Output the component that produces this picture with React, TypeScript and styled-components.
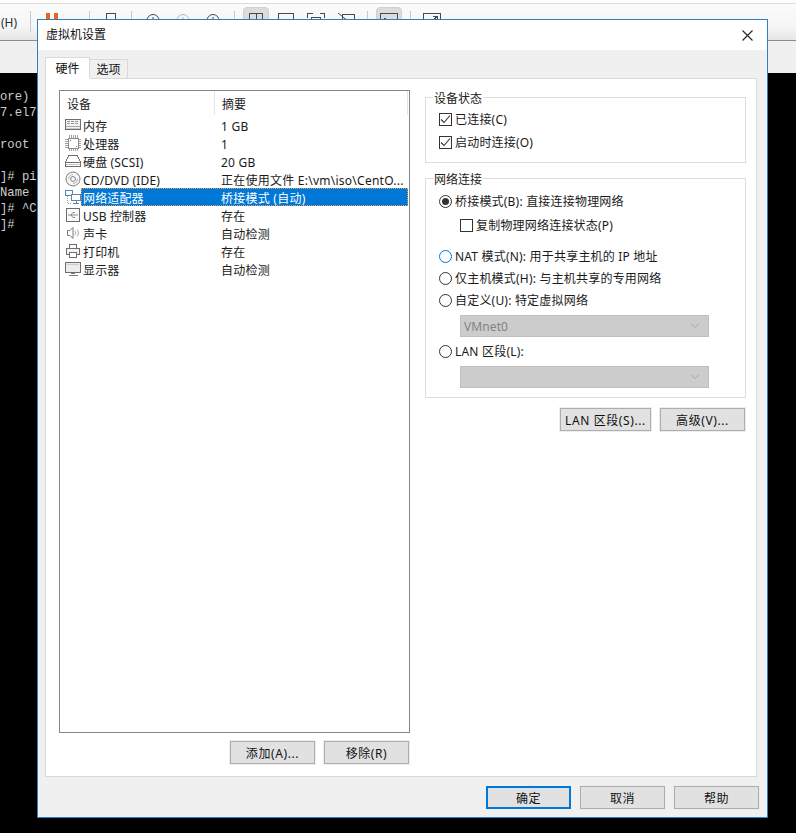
import React from "react";
import styled, { createGlobalStyle } from "styled-components";

const Global = createGlobalStyle`
  html, body { margin: 0; padding: 0; background: #000; }
  body { width: 796px; height: 833px; overflow: hidden; font-family: "Noto Sans", "Noto Sans CJK SC", sans-serif; font-size: 12px; color: #1a1a1a; position: relative; }
`;

const Page = styled.div`
  width: 796px; height: 833px; display: flex; flex-direction: column; position: relative; background: #000; overflow: hidden;
`;
const Toolbar = styled.div`
  flex: none; display: flex; align-items: flex-start;
  margin-top: 3px; padding-top: 3px; box-sizing: border-box; height: 38px;
  border-top: 1px solid #dcdcdc; border-bottom: 1px solid #8c8c8c;
  background: linear-gradient(#fbfbfb, #f6f6f6 60%, #e6e6e6);
  box-shadow: 0 -3px 0 #fff;
`;
const MenuHint = styled.span`
  width: 30px; height: 24px; line-height: 24px; margin-top: 4px; padding-left: 1px; box-sizing: border-box; font-size: 12px; color: #2a2a3a; flex: none;
`;
const ToolSep = styled.span<{ $before?: number }>`
  width: 1px; height: 21px; margin: 4px 6px 0 ${(p) => p.$before ?? 6}px; background: #c9c9c9; flex: none;
`;
const ToolSlot = styled.span<{ $on?: boolean }>`
  width: ${(p) => (p.$on ? 26 : 30)}px; height: 28px; margin: 0 ${(p) => (p.$on ? 2 : 0)}px; flex: none; display: flex; justify-content: center; padding-top: 6px; box-sizing: border-box;
  ${(p) => (p.$on ? "background:#dcdcdc;border:1px solid #d0d0d0;border-radius:4px;padding-top:5px;" : "")}
`;
const Strip = styled.div`
  height: 32px; flex: none; background: #f0f0f0;
`;
const Terminal = styled.div`
  flex: 1; background: #000; padding-top: 16px; color: #cfcfcf;
  font-family: "Liberation Mono", monospace; font-size: 12.2px; line-height: 16px;
`;
const TermLine = styled.div`
  height: 16px; white-space: pre;
`;

const Dialog = styled.div`
  position: absolute; left: 37px; top: 19px; width: 731px; height: 799px; box-sizing: border-box;
  border: 1px solid #2f7fc4; background: #f0f0f0; display: flex; flex-direction: column;
`;
const TitleBar = styled.div`
  height: 30px; flex: none; background: #fff; display: flex; align-items: center; justify-content: space-between; padding: 0 14px 0 8px;
`;
const Title = styled.span`
  font-size: 12px; color: #111; line-height: 30px;
`;
const Body = styled.div`
  flex: 1; display: flex; flex-direction: column; padding: 7px 10px 0 7px; min-height: 0;
`;
const Tabs = styled.div`
  display: flex; align-items: flex-end; height: 22px; flex: none; position: relative; z-index: 1; margin-bottom: -1px;
`;
const Tab = styled.div<{ $active?: boolean }>`
  box-sizing: border-box; display: flex; align-items: center; justify-content: center; color: #111;
  width: ${(p) => (p.$active ? 45 : 38)}px; height: ${(p) => (p.$active ? 22 : 20)}px;
  background: ${(p) => (p.$active ? "#fff" : "#f0f0f0")};
  border: 1px solid #d9d9d9; ${(p) => (p.$active ? "border-bottom-color:#fff;" : "border-left:none;")}
`;
const Panel = styled.div`
  width: 712px; height: 699px; flex: none; box-sizing: border-box; background: #fff; border: 1px solid #d9d9d9;
  padding: 11px 0 0 13px; display: flex; gap: 15px;
`;
const LeftCol = styled.div`
  width: 351px; flex: none; display: flex; flex-direction: column;
`;
const RightCol = styled.div`
  width: 321px; flex: none; display: flex; flex-direction: column; padding-top: 7px;
`;
const DeviceList = styled.div`
  height: 643px; box-sizing: border-box; border: 1px solid #828790; background: #fff; display: flex; flex-direction: column;
`;
const HeaderRow = styled.div`
  height: 25px; flex: none; display: flex; line-height: 28px; color: #222;
`;
const HeaderCell = styled.div<{ $w: number }>`
  width: ${(p) => p.$w}px; box-sizing: border-box; padding-left: 7px; border-right: 1px solid #e5e5e5; height: 24px; flex: none;
`;
const Row = styled.div`
  height: 18px; flex: none; display: flex; align-items: center; padding-left: 5px;
`;
const IconBox = styled.span`
  width: 16px; height: 18px; flex: none; display: flex; align-items: center; justify-content: center;
`;
const RowBody = styled.div<{ $sel?: boolean }>`
  display: flex; width: 327px; height: 18px; line-height: 18px; align-items: flex-start; padding: 2px 0 0 2px; box-sizing: border-box; white-space: nowrap; flex: none;
  ${(p) => (p.$sel ? "background:#0078d7;color:#fff;outline:1px dotted #e49a4e;outline-offset:-1px;" : "color:#1a1a1a;")}
`;
const NameCell = styled.span`
  width: 138px; flex: none; letter-spacing: .15px;
`;
const SummaryCell = styled.span`
  flex: 1; letter-spacing: .25px;
`;
const ActionRow = styled.div<{ $top: number; $right: number }>`
  display: flex; justify-content: flex-end; gap: 9px; margin-top: ${(p) => p.$top}px; padding-right: ${(p) => p.$right}px;
`;
const Btn = styled.button<{ $w?: number; $primary?: boolean }>`
  width: ${(p) => p.$w ?? 85}px; height: 23px; box-sizing: border-box; padding: 0; font: inherit; color: #111; letter-spacing: .6px;
  background: #e1e1e1; border: 1px solid #adadad; outline: 1px solid #ededed;
  ${(p) => (p.$primary ? "border:2px solid #0078d7;outline:none;" : "")}
`;
const Group = styled.div<{ $h: number; $pt: number }>`
  position: relative; height: ${(p) => p.$h}px; box-sizing: border-box; border: 1px solid #dcdcdc; padding-top: ${(p) => p.$pt}px; margin-bottom: 15px; flex: none;
`;
const Legend = styled.span`
  position: absolute; left: 7px; top: -7px; line-height: 16px; padding: 0 1px; background: #fff; color: #222;
`;
const Option = styled.label<{ $indent?: boolean; $top?: number }>`
  display: flex; align-items: center; height: 22px; gap: 3px; margin-top: ${(p) => p.$top ?? 0}px; padding-left: ${(p) => (p.$indent ? 34 : 13)}px; color: #1a1a1a; white-space: nowrap; letter-spacing: .2px;
`;
const CheckMark = styled.span`
  width: 13px; height: 13px; box-sizing: border-box; border: 1px solid #333; background: #fff; flex: none; display: flex; align-items: center; justify-content: center;
`;
const RadioMark = styled.span<{ $on?: boolean; $hover?: boolean }>`
  width: 13px; height: 13px; box-sizing: border-box; border-radius: 50%; border: 1px solid ${(p) => (p.$hover ? "#0078d7" : "#333")}; background: #fff; flex: none; display: flex; align-items: center; justify-content: center;
  &::after { content: ""; width: 7px; height: 7px; border-radius: 50%; background: ${(p) => (p.$on ? "#333" : "transparent")}; }
`;
const FakeSelect = styled.div<{ $top: number }>`
  width: 249px; height: 22px; box-sizing: border-box; margin: ${(p) => p.$top}px 0 0 34px; background: #ccc; border: 1px solid #bfbfbf; color: #838383; display: flex; align-items: center; justify-content: space-between; padding: 0 8px 0 3px; letter-spacing: .1px;
`;
const Footer = styled.div`
  display: flex; justify-content: flex-end; gap: 9px; margin: 9px -2px 0 0;
`;

const Check = () => (
  <svg width="11" height="11" viewBox="0 0 11 11"><path d="M1 5.5 4 8.5 10 1.5" fill="none" stroke="#333" strokeWidth="1.1" /></svg>
);
const Chevron = () => (
  <svg width="10" height="6" viewBox="0 0 10 6"><path d="M1 .5 5 4.5 9 .5" fill="none" stroke="#a5a5a5" /></svg>
);
const CloseIcon = () => (
  <svg width="11" height="11" viewBox="0 0 11 11"><path d="M.5.5 10.5 10.5M10.5.5.5 10.5" stroke="#222" strokeWidth="1.1" /></svg>
);

const g = "#6d6d6d";
const Svg = ({ children }: { children: React.ReactNode }) => (
  <svg width="16" height="16" viewBox="0 0 16 16" fill="none" stroke={g} strokeWidth="1" shapeRendering="crispEdges">{children}</svg>
);
const MemoryIcon = () => (
  <Svg><path d="M.5 2.5h15v10H.5z" fill="#f2f2f2" /><path d="M2 4.5h12M2 6.5h12" stroke="#9a9a9a" strokeDasharray="3 1" /><path d="M1 9.5h14" stroke="#aaa" /><path d="M1 11.5h14" stroke="#ccc" /></Svg>
);
const CpuIcon = () => (
  <Svg>
    <path d="M4.5 0v16M6.5 0v16M8.5 0v16M10.5 0v16M12.5 0v16M0 4.5h16M0 6.5h16M0 8.5h16M0 10.5h16M0 12.5h16" stroke="#a0a0a0" />
    <path d="M3.5 3.5h10v10h-10z" fill="#fff" stroke="#8a8a8a" />
    <path d="M5 5h1v1H5zM11 11h1v1h-1z" fill="#777" stroke="none" />
  </Svg>
);
const DiskIcon = () => (
  <Svg><path d="M3.5 2.5h9l3 7v4H.5v-4z" fill="#fff" /><path d="M.5 9.5h15" /><path d="M1 11.5h14" stroke="#c4c4c4" /></Svg>
);
const CdIcon = () => (
  <svg width="16" height="16" viewBox="0 0 16 16" fill="none" stroke="#7d7d7d"><circle cx="8" cy="8" r="7" fill="#f6f6f6" /><circle cx="8" cy="8" r="2.4" fill="#fff" /><path d="M3.5 8a4.5 4.5 0 0 1 4.5-4.5" stroke="#bbb" /><path d="M12.5 8a4.5 4.5 0 0 1-4.5 4.5" stroke="#aaa" /></svg>
);
const NetIcon = () => (
  <svg width="16" height="16" viewBox="0 0 16 16" fill="none" strokeWidth="1" shapeRendering="crispEdges"><path d="M.5 1.5h7v5h-7z" stroke="#5b86ad" fill="#fff" /><path d="M6.5 5.5h9v6h-9z" stroke="#5b86ad" fill="#fff" /><path d="M11 12v2M8 14.5h6" stroke="#5b86ad" /><path d="M2.5 7v7.5h4" stroke="#8aa" strokeDasharray="1 1" /></svg>
);
const UsbIcon = () => (
  <Svg><path d="M1.5 1.5h13v13h-13z" fill="#fbfbfb" /><path d="M3 8h10M6 8l2-2.5h2M6 8l2 2.5h2" stroke="#888" shapeRendering="auto" /></Svg>
);
const SoundIcon = () => (
  <svg width="16" height="16" viewBox="0 0 16 16" fill="none" stroke="#7a7a7a"><path d="M2.5 5.5h2.5l3-3v11l-3-3H2.5z" fill="#fff" /><path d="M10 6a3 3 0 0 1 0 4M12 4.5a5 5 0 0 1 0 7" stroke="#aaa" /></svg>
);
const PrinterIcon = () => (
  <Svg><path d="M4.5 1.5h7v4h-7z" fill="#fff" /><path d="M1.5 5.5h13v6h-13z" fill="#f3f3f3" /><path d="M4.5 9.5h7v5h-7z" fill="#fff" /></Svg>
);
const MonitorIcon = () => (
  <Svg><path d="M.5 1.5h15v10H.5z" fill="#ececec" /><path d="M2 3.5h12" stroke="#ccc" /><path d="M6 12.5h4M3.5 14.5h9" stroke="#777" /></Svg>
);

const T = ({ children }: { children: React.ReactNode }) => (
  <svg width="18" height="22" viewBox="0 0 18 22" fill="none" stroke="#4a4a4a" strokeWidth="1" shapeRendering="crispEdges">{children}</svg>
);
const Clock = ({ c = "#4a4a4a" }: { c?: string }) => (
  <svg width="14" height="22" viewBox="0 0 14 22" fill="none" stroke={c}><circle cx="7" cy="7.5" r="6" /><path d="M7 4v4" /></svg>
);

const devices: [React.ReactNode, string, string, boolean?][] = [
  [<MemoryIcon />, "内存", "1 GB"],
  [<CpuIcon />, "处理器", "1"],
  [<DiskIcon />, "硬盘 (SCSI)", "20 GB"],
  [<CdIcon />, "CD/DVD (IDE)", "正在使用文件 E:\\vm\\iso\\CentO..."],
  [<NetIcon />, "网络适配器", "桥接模式 (自动)", true],
  [<UsbIcon />, "USB 控制器", "存在"],
  [<SoundIcon />, "声卡", "自动检测"],
  [<PrinterIcon />, "打印机", "存在"],
  [<MonitorIcon />, "显示器", "自动检测"],
];

const termLines = ["ore)", "7.el7", " ", "root", " ", "]# pi", "Name", "]# ^C", "]#"];

export default function App() {
  return (
    <Page>
      <Global />
      <Toolbar>
        <MenuHint>(H)</MenuHint>
        <ToolSep $before={0} />
        <ToolSlot>
          <svg width="12" height="22" viewBox="0 0 12 22"><path d="M0 0h4v16H0zM8 0h4v16H8z" fill="#e8641f" /></svg>
        </ToolSlot>
        <ToolSep $before={22} />
        <ToolSlot><T><path d="M4.5 .5h9v6h-9zM1.5 6.5h15v6h-15z" /></T></ToolSlot>
        <ToolSep $before={5} />
        <ToolSlot><Clock /></ToolSlot>
        <ToolSlot><Clock c="#b5b5b5" /></ToolSlot>
        <ToolSlot><Clock /></ToolSlot>
        <ToolSep />
        <ToolSlot $on><T><path d="M2.5 .5h13v12h-13zM9 .5v12" /></T></ToolSlot>
        <ToolSlot><T><path d="M1.5 .5h15v12h-15z" /></T></ToolSlot>
        <ToolSlot><T><path d="M.5 5V.5h5M12.5.5h5V5M4.5 4.5h9v8h-9z" /></T></ToolSlot>
        <ToolSlot><T><path d="M5.5 1.5h12v11h-12z" /><path d="M1 0l10 8" shapeRendering="auto" /></T></ToolSlot>
        <ToolSep />
        <ToolSlot $on><T><path d="M.5 .5h17v12H.5zM4 5h1v1H4z" /></T></ToolSlot>
        <ToolSep />
        <ToolSlot><T><path d="M.5 .5h17v12H.5zM10 3.5h4v4M14 3.5l-4 4" /></T></ToolSlot>
      </Toolbar>
      <Strip />
      <Terminal>
        {termLines.map((l, i) => (
          <TermLine key={i}>{l}</TermLine>
        ))}
      </Terminal>

      <Dialog>
        <TitleBar>
          <Title>虚拟机设置</Title>
          <CloseIcon />
        </TitleBar>
        <Body>
          <Tabs>
            <Tab $active>硬件</Tab>
            <Tab>选项</Tab>
          </Tabs>
          <Panel>
            <LeftCol>
              <DeviceList>
                <HeaderRow>
                  <HeaderCell $w={155}>设备</HeaderCell>
                  <HeaderCell $w={193}>摘要</HeaderCell>
                </HeaderRow>
                {devices.map(([icon, name, summary, sel]) => (
                  <Row key={name}>
                    <IconBox>{icon}</IconBox>
                    <RowBody $sel={sel}>
                      <NameCell>{name}</NameCell>
                      <SummaryCell>{summary}</SummaryCell>
                    </RowBody>
                  </Row>
                ))}
              </DeviceList>
              <ActionRow $top={8} $right={1}>
                <Btn>添加(A)...</Btn>
                <Btn>移除(R)</Btn>
              </ActionRow>
            </LeftCol>
            <RightCol>
              <Group $h={66} $pt={10}>
                <Legend>设备状态</Legend>
                <Option><CheckMark><Check /></CheckMark>已连接(C)</Option>
                <Option $top={1}><CheckMark><Check /></CheckMark>启动时连接(O)</Option>
              </Group>
              <Group $h={220} $pt={11}>
                <Legend>网络连接</Legend>
                <Option><RadioMark $on />桥接模式(B): 直接连接物理网络</Option>
                <Option $indent $top={2}><CheckMark />复制物理网络连接状态(P)</Option>
                <Option $top={9}><RadioMark $hover />NAT 模式(N): 用于共享主机的 IP 地址</Option>
                <Option><RadioMark />仅主机模式(H): 与主机共享的专用网络</Option>
                <Option><RadioMark />自定义(U): 特定虚拟网络</Option>
                <FakeSelect $top={4}>VMnet0<Chevron /></FakeSelect>
                <Option $top={3}><RadioMark />LAN 区段(L):</Option>
                <FakeSelect $top={4}><span /><Chevron /></FakeSelect>
              </Group>
              <ActionRow $top={-5} $right={1}>
                <Btn $w={91}>LAN 区段(S)...</Btn>
                <Btn>高级(V)...</Btn>
              </ActionRow>
            </RightCol>
          </Panel>
          <Footer>
            <Btn $primary>确定</Btn>
            <Btn>取消</Btn>
            <Btn>帮助</Btn>
          </Footer>
        </Body>
      </Dialog>
    </Page>
  );
}
